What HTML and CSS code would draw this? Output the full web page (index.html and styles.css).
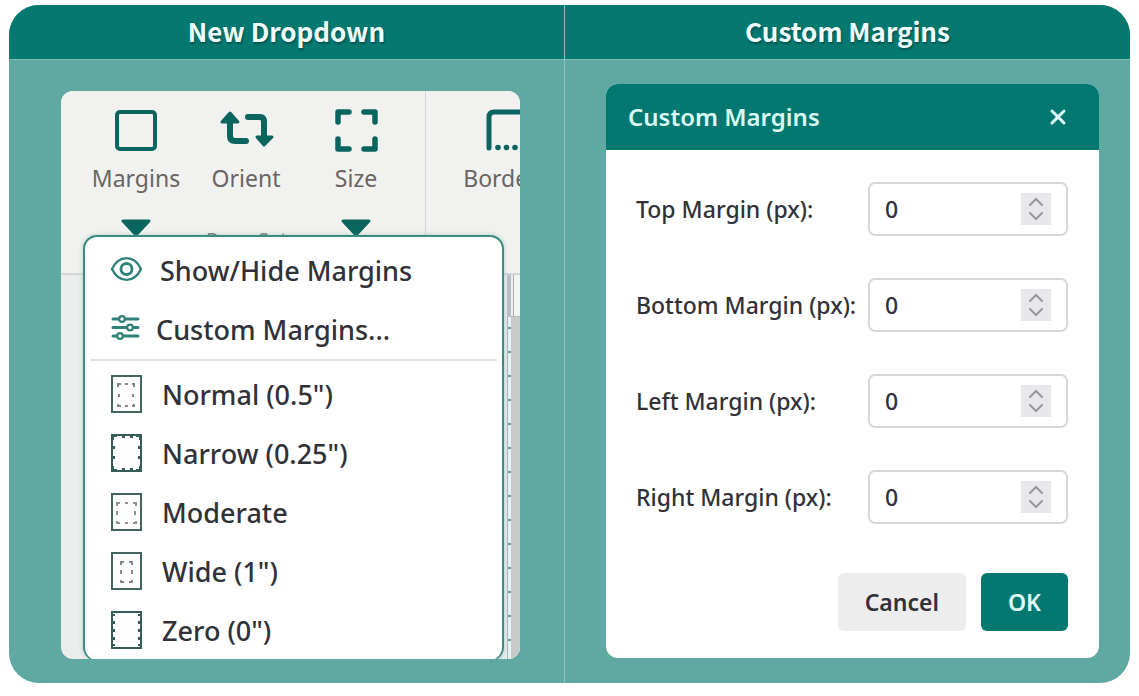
FILE: index.html
```html
<!DOCTYPE html>
<html lang="en">
<head>
<meta charset="utf-8">
<title>Margins</title>
<link rel="stylesheet" href="styles.css">
</head>
<body>
<main class="board">
  <section class="column">
    <h1 class="column-title">New Dropdown</h1>
    <div class="column-body column-body-left">
      <div class="editor">
        <div class="backdrop">
          <div class="toolbar">
            <div class="tools">
              <button class="tool" type="button">
                <svg class="tool-icon" viewBox="0 0 56 48"><rect x="9" y="5" width="38" height="37" rx="3" fill="none" stroke="#0b655f" stroke-width="4"/></svg>
                <span>Margins</span>
                <svg class="caret" viewBox="0 0 30 20"><path d="M2 2H28L15 16Z"/></svg>
              </button>
              <button class="tool" type="button">
                <svg class="tool-icon" viewBox="0 0 56 48"><g fill="none" stroke="#0b655f" stroke-width="6" stroke-linecap="round" stroke-linejoin="round"><path d="M12 14V29Q12 34 17 34H28"/><path d="M30 10H42Q46 10 46 15V30"/></g><g fill="#0b655f" stroke="#0b655f" stroke-width="3" stroke-linejoin="round"><path d="M4 15L12 6L20 15Z"/><path d="M39 30H54L46 38Z"/></g></svg>
                <span>Orient</span>
              </button>
              <button class="tool" type="button">
                <svg class="tool-icon" viewBox="0 0 56 48"><path d="M10 15V5H21M36 5H47V15M47 32V42H36M21 42H10V32" fill="none" stroke="#0b655f" stroke-width="5.500" stroke-linecap="round" stroke-linejoin="round"/></svg>
                <span>Size</span>
                <svg class="caret" viewBox="0 0 30 20"><path d="M2 2H28L15 16Z"/></svg>
              </button>
              <span class="group-name">Page Setup</span>
            </div>
            <div class="tools tools-next">
              <button class="tool" type="button">
                <svg class="tool-icon" viewBox="0 0 56 48"><path d="M11 41V10Q11 5 16 5H56" fill="none" stroke="#0b655f" stroke-width="5" stroke-linecap="round"/><g fill="#0b655f"><circle cx="20" cy="40.500" r="2.800"/><circle cx="28.500" cy="40.500" r="2.800"/><circle cx="37" cy="40.500" r="2.800"/></g></svg>
                <span>Borders</span>
              </button>
            </div>
          </div>
          <div class="canvas">
            <div class="ruler"></div>
            <div class="sheet"></div>
          </div>
        </div>
        <div class="menu">
          <button class="item" type="button">
            <svg class="item-icon" viewBox="0 0 32 40" fill="none" stroke="#2f8279" stroke-width="2.400"><path d="M2 18C9 3.500 24 3.500 31 18C24 32.500 9 32.500 2 18Z"/><circle cx="16.500" cy="18" r="5.500" stroke-width="2.800"/></svg>
            <span class="item-text item-text-eye">Show/Hide Margins</span>
          </button>
          <button class="item" type="button">
            <svg class="item-icon" viewBox="0 0 32 40" fill="#fff" stroke="#2f8279" stroke-width="3" stroke-linecap="round"><path d="M3 9H28M3 17.500H28M3 26H28"/><g stroke-width="2.200"><circle cx="12" cy="9" r="2.800"/><circle cx="20" cy="17.500" r="2.800"/><circle cx="10" cy="26" r="2.800"/></g></svg>
            <span class="item-text item-text-custom">Custom Margins...</span>
          </button>
          <hr class="rule">
          <button class="item" type="button">
            <svg class="item-icon" viewBox="0 0 32 40" fill="none"><rect x="2" y="1" width="29" height="36" stroke="#42655f" stroke-width="2"/><path d="M8 12V9H11M15 9H18M22 9H24V12M9 19V22M23 19V22M8 29V31H11M15 31H18M22 31H24V29" stroke="#7f8987" stroke-width="2"/></svg>
            <span class="item-text">Normal (0.5")</span>
          </button>
          <button class="item" type="button">
            <svg class="item-icon" viewBox="0 0 32 40" fill="none"><rect x="2" y="1" width="29" height="36" stroke="#365d58" stroke-width="2"/><path d="M3 6V2H7M12 3H15M20 3H23M26 2H30V6M4 12V15M4 22V25M29 12V15M29 22V25M3 32V36H7M12 35H15M20 35H23M26 36H30V32" stroke="#365d58" stroke-width="2"/></svg>
            <span class="item-text">Narrow (0.25")</span>
          </button>
          <button class="item" type="button">
            <svg class="item-icon" viewBox="0 0 32 40" fill="none"><rect x="2" y="1" width="29" height="36" stroke="#42655f" stroke-width="2"/><path d="M7 13V10H10M15 10H18M23 10H26V13M7 18V22M25 18V22M7 28V30H10M15 30H18M23 30H26V28" stroke="#8b9492" stroke-width="2"/></svg>
            <span class="item-text">Moderate</span>
          </button>
          <button class="item" type="button">
            <svg class="item-icon" viewBox="0 0 32 40" fill="none"><rect x="2" y="1" width="29" height="36" stroke="#42655f" stroke-width="2"/><path d="M11 13V10H14M19 10H22V13M11 18V22M22 18V22M11 28V30H14M19 30H22V28" stroke="#7f8987" stroke-width="2"/></svg>
            <span class="item-text">Wide (1")</span>
          </button>
          <button class="item" type="button">
            <svg class="item-icon" viewBox="0 0 32 40" fill="none"><rect x="2" y="1" width="29" height="36" stroke="#365d58" stroke-width="2"/><path d="M4 3V5M4 10V13M4 18V21M4 26V29M4 33V35M29 3V5M29 10V13M29 18V21M29 26V29M29 33V35" stroke="#365d58" stroke-width="2"/></svg>
            <span class="item-text">Zero (0")</span>
          </button>
        </div>
      </div>
    </div>
  </section>
  <section class="column column-second">
    <h1 class="column-title">Custom Margins</h1>
    <div class="column-body column-body-right">
      <form class="dialog">
        <header class="dialog-head">
          <h2 class="dialog-title">Custom Margins</h2>
          <button class="close" type="button" aria-label="Close"><svg viewBox="0 0 18 18"><path d="M3 3L15 15M15 3L3 15"/></svg></button>
        </header>
        <div class="fields">
          <div class="field"><label for="top">Top Margin (px):</label><span class="number"><input id="top" type="number" value="0"><svg class="spin" viewBox="0 0 30 32"><path d="M9 12L15 6L21 12M9 20L15 26L21 20"/></svg></span></div>
          <div class="field"><label for="bottom">Bottom Margin (px):</label><span class="number"><input id="bottom" type="number" value="0"><svg class="spin" viewBox="0 0 30 32"><path d="M9 12L15 6L21 12M9 20L15 26L21 20"/></svg></span></div>
          <div class="field"><label for="left">Left Margin (px):</label><span class="number"><input id="left" type="number" value="0"><svg class="spin" viewBox="0 0 30 32"><path d="M9 12L15 6L21 12M9 20L15 26L21 20"/></svg></span></div>
          <div class="field"><label for="right">Right Margin (px):</label><span class="number"><input id="right" type="number" value="0"><svg class="spin" viewBox="0 0 30 32"><path d="M9 12L15 6L21 12M9 20L15 26L21 20"/></svg></span></div>
        </div>
        <footer class="actions">
          <button class="btn btn-cancel" type="button">Cancel</button>
          <button class="btn btn-ok" type="button">OK</button>
        </footer>
      </form>
    </div>
  </section>
</main>
</body>
</html>
```

FILE: styles.css
```css
* { box-sizing: border-box; }
body {
  margin: 0;
  padding: 5px 9px 13px;
  background: #fff;
  font-family: "Noto Sans", sans-serif;
  color: #303238;
}
button, input { font: inherit; color: inherit; margin: 0; }
button { border: 0; padding: 0; background: none; cursor: pointer; }
svg { display: block; flex: none; }

.board {
  display: grid;
  grid-template-columns: 555fr 566fr;
  min-height: calc(100vh - 18px);
  border-radius: 30px;
  overflow: hidden;
  background: #5fa9a2;
}
.column { display: flex; flex-direction: column; min-width: 0; }
.column-second { border-left: 1px solid #8fc2bd; }
.column-title {
  margin: 0;
  height: 55px;
  border-bottom: 1px solid #84bdb7;
  background: #057870;
  color: #f0fffd;
  font: 700 26px/52px "Noto Sans CJK SC", sans-serif;
  text-align: center;
  text-shadow: 1px 2px 2px rgba(0, 50, 46, .5);
}
.column-body { flex: 1; display: grid; }
.column-body-left { padding: 31px 44px 24px 52px; }
.column-body-right { padding: 24px 31px 25px 41px; }

.editor {
  display: grid;
  grid-template: minmax(0, 1fr) / minmax(0, 1fr);
  border-radius: 12px;
  overflow: hidden;
}
.backdrop, .menu { grid-area: 1 / 1; }
.backdrop { display: flex; flex-direction: column; background: #ebecec; }
.toolbar {
  display: flex;
  height: 184px;
  border-bottom: 2px solid #d4d6d6;
  background: #f1f1ef;
  overflow: hidden;
}
.tools {
  flex: none;
  display: grid;
  grid-template-columns: repeat(3, 110px);
  align-content: start;
  padding: 16px 14px 0 20px;
}
.tools-next { border-left: 1px solid #d4d5d4; grid-template-columns: 132px; padding-left: 14px; }
.tool {
  display: flex;
  flex-direction: column;
  align-items: center;
  color: #686563;
  font-size: 23px;
  line-height: 30px;
}
.tool span { margin-top: 8px; }
.tool-icon { width: 56px; height: 48px; }
.caret { width: 30px; height: 20px; margin-top: 26px; fill: #0b655f; stroke: #0b655f; stroke-width: 3; stroke-linejoin: round; }
.group-name {
  grid-column: 1 / -1;
  padding-left: 125px;
  margin-top: -11px;
  color: #817e7c;
  font-size: 20px;
  line-height: 24px;
}
.canvas { flex: 1; display: grid; grid-template: 42px 1fr / 1fr 13px; }
.ruler {
  grid-column: 2;
  background: linear-gradient(90deg, #b8bebf 4px, #eef0f0 4px 6px, #a6adb3 6px 7px, #f3f4f4 7px);
  border-bottom: 1px solid #bbb;
}
.sheet {
  grid-column: 2;
  border-left: 1px solid #b0b3b3;
  background: linear-gradient(90deg, transparent 3px, #c8c9c9 3px), repeating-linear-gradient(#e5f3f3 0 10px, #6c9b9b 10px 12px, #e5f3f3 12px 24px);
}

.menu {
  position: relative;
  margin: 144px 16px -2px 22px;
  padding: 4px 5px 0;
  border: 2px solid #3d8a82;
  border-bottom-width: 1px;
  border-radius: 14px;
  background: #fff;
  box-shadow: 0 0 4px rgba(60, 160, 150, .4);
}
.item {
  display: flex;
  align-items: center;
  width: 100%;
  height: 59px;
  padding-left: 20px;
  font-size: 27px;
  font-weight: 500;
  line-height: 36px;
  text-align: left;
}
.item-icon { width: 32px; height: 40px; }
.item-text { padding-left: 20px; }
.item-text-eye { padding-left: 18px; }
.item-text-custom { padding-left: 14px; }
.rule { margin: 0 0 4px; border: 0; border-top: 2px solid #d7e3e2; }

.dialog {
  display: flex;
  flex-direction: column;
  border-radius: 12px;
  overflow: hidden;
  background: #fff;
}
.dialog-head {
  display: flex;
  align-items: center;
  justify-content: space-between;
  height: 66px;
  padding: 0 32px 0 22px;
  background: #037870;
  color: #d9fbf3;
}
.dialog-title { margin: 0; font-size: 24px; font-weight: 600; line-height: 32px; }
.close svg { width: 18px; height: 18px; fill: none; stroke: #e5fffb; stroke-width: 3; stroke-linecap: round; }
.fields { display: grid; gap: 42px; padding: 32px 31px 0 30px; }
.field { display: flex; align-items: center; justify-content: space-between; font-size: 23px; font-weight: 500; line-height: 30px; white-space: nowrap; }
.number {
  display: flex;
  align-items: center;
  width: 200px;
  height: 54px;
  padding: 0 15px;
  border: 2px solid #d8d8da;
  border-radius: 7px;
  background: #fff;
}
.number input {
  flex: 1;
  min-width: 0;
  padding: 0;
  border: 0;
  outline: 0;
  background: none;
  appearance: textfield;
}
.number input::-webkit-inner-spin-button { appearance: none; }
.spin { width: 30px; height: 32px; background: #e8e7eb; fill: none; stroke: #98989c; stroke-width: 2; stroke-linecap: round; }
.actions { display: flex; justify-content: flex-end; gap: 15px; margin-top: auto; padding: 48px 31px 27px; }
.btn { height: 58px; border-radius: 6px; font-size: 23px; font-weight: 600; line-height: 32px; }
.btn-cancel { padding: 0 27px; background: #ededed; }
.btn-ok { padding: 0 27px; background: #037870; color: #e2fff9; }
```
